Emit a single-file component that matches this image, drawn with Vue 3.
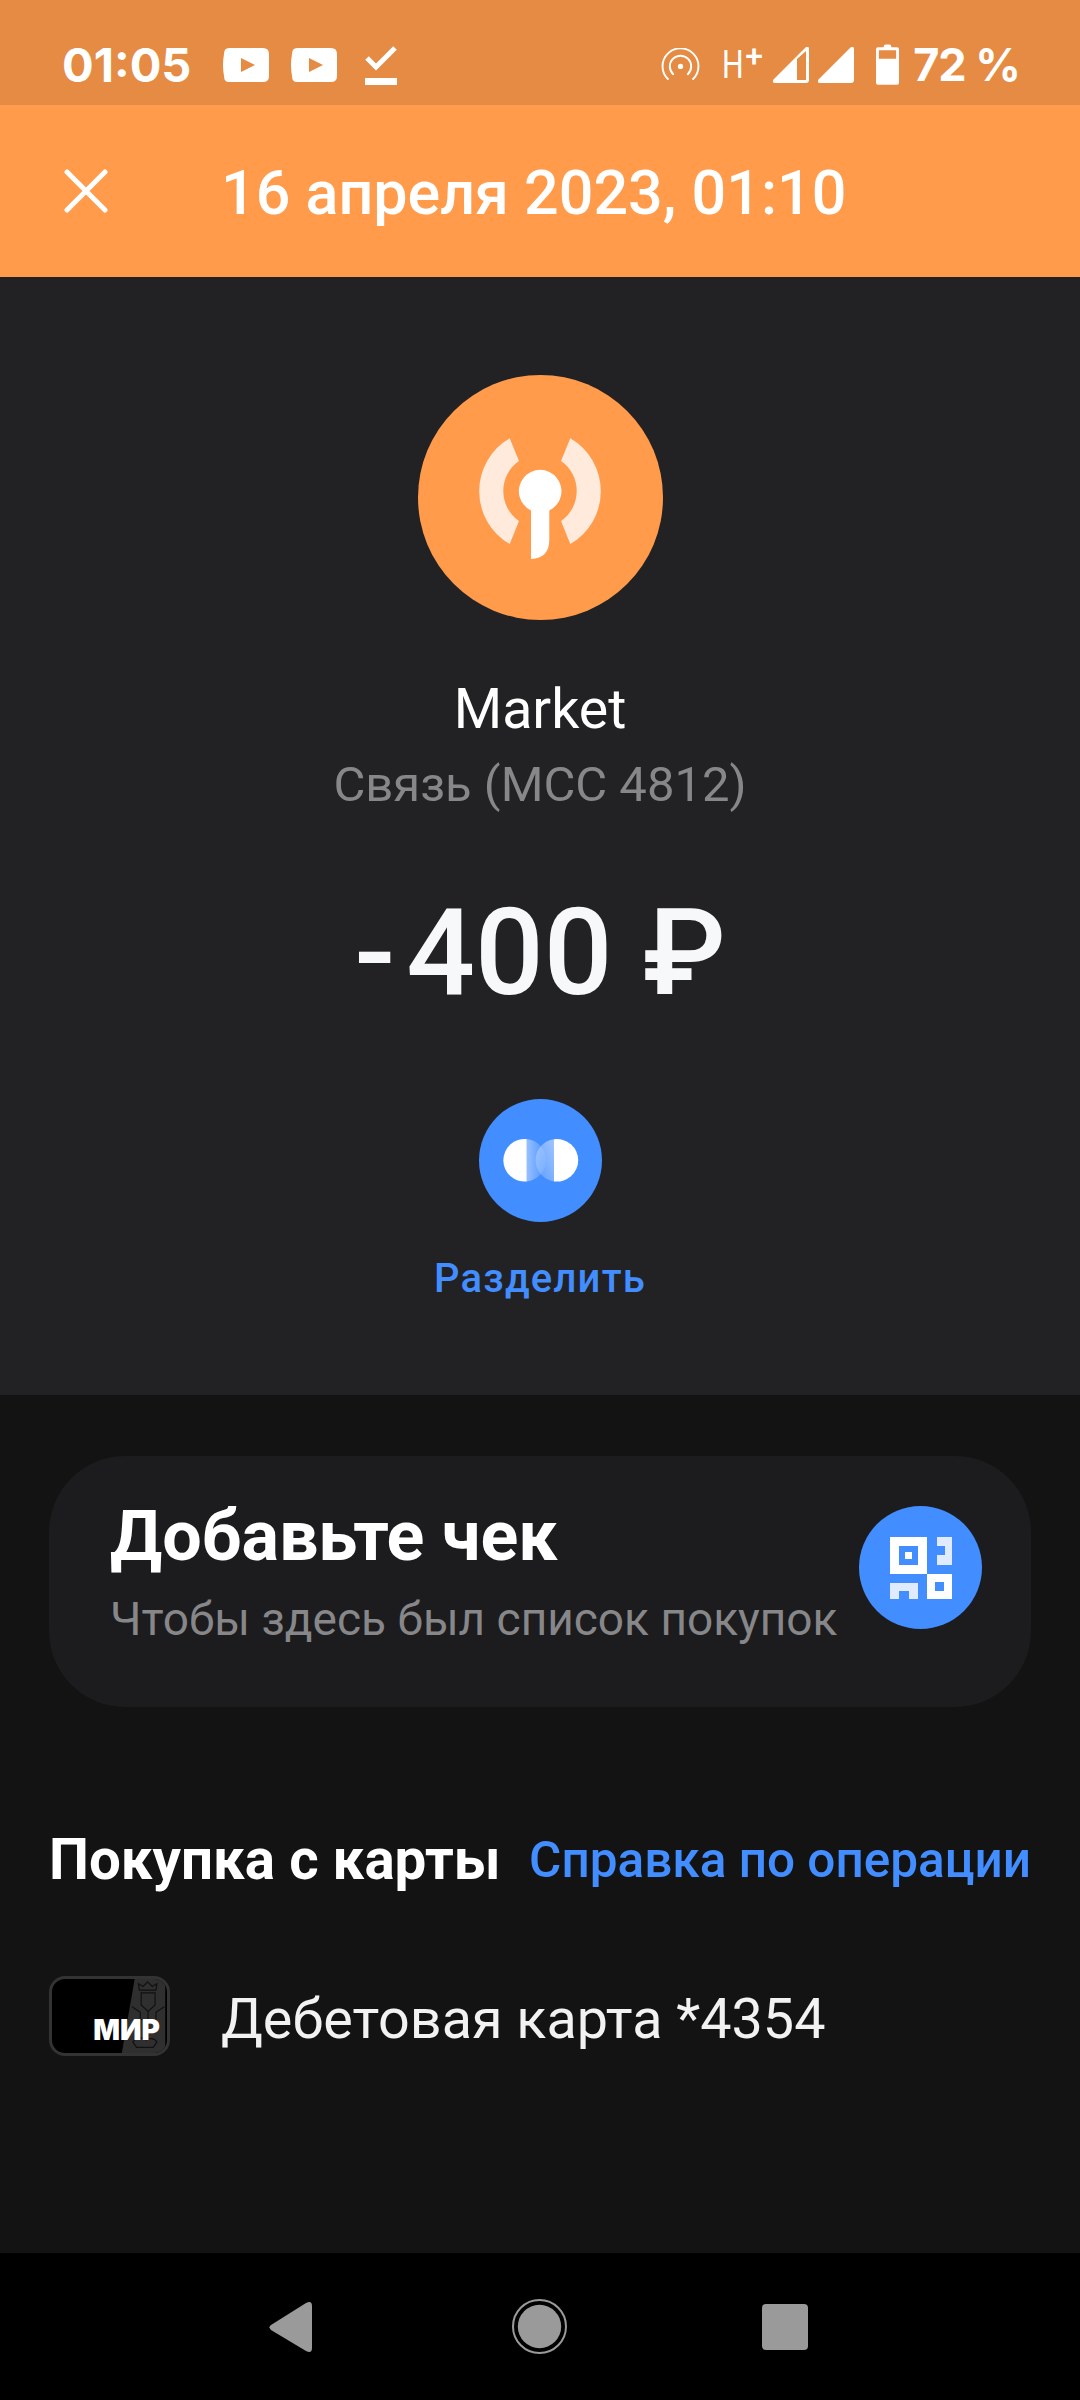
<script setup>
const title = '16 апреля 2023, 01:10'
</script>

<template>
  <div class="screen">
    <div class="status">
      <div class="status-left">
        <span class="time">01:05</span>
        <svg class="yt" viewBox="0 0 46 34"><path fill-rule="evenodd" fill="#fff" d="M6 0H40Q46 0 46 6Q47 17 46 28Q46 34 40 34H6Q1 34 1 28Q-1 17 1 6Q1 0 6 0ZM18 10V24L32 17Z"/></svg>
        <svg class="yt" viewBox="0 0 46 34"><path fill-rule="evenodd" fill="#fff" d="M6 0H40Q46 0 46 6Q47 17 46 28Q46 34 40 34H6Q1 34 1 28Q-1 17 1 6Q1 0 6 0ZM18 10V24L32 17Z"/></svg>
        <svg class="dl" viewBox="0 0 32 40"><path d="M2 13L11 22L30 3" fill="none" stroke="#fff" stroke-width="5"/><rect y="33" width="32" height="7" fill="#fff"/></svg>
      </div>
      <div class="status-right">
        <svg class="hot" viewBox="0 0 40 34" fill="none" stroke="#fff" stroke-width="2" stroke-linecap="round"><path d="M7 32A18.500 18.500 0 1 1 33 32"/><path d="M12.500 27A11 11 0 1 1 27.500 27"/><circle cx="20" cy="19" r="2.700" fill="#fff" stroke="none"/></svg>
        <span class="hplus"><span class="h">H</span><span class="plus">+</span></span>
        <svg class="sig" viewBox="0 0 36 36"><path fill="#fff" fill-rule="evenodd" d="M0 33L33 0Q36-1 36 2V33Q36 36 33 36H2Q-1 36 0 33ZM24 12V33H33V4Z"/></svg>
        <svg class="sig sig2" viewBox="0 0 36 36"><path fill="#fff" d="M0 33L33 0Q36-1 36 2V33Q36 36 33 36H2Q-1 36 0 33Z"/></svg>
        <svg class="bat" viewBox="0 0 24 42"><path fill="#fff" fill-rule="evenodd" d="M8 3Q8 0 10 0H14Q16 0 16 3H22Q24 3 24 5V40Q24 42 22 42H2Q0 42 0 40V5Q0 3 2 3ZM3 6V15H21V6Z"/></svg>
        <span class="pct">72 %</span>
      </div>
    </div>

    <header class="toolbar">
      <svg class="close" viewBox="0 0 44 44"><path d="M3 3L41 41M41 3L3 41" stroke="#fff" stroke-width="5" stroke-linecap="round"/></svg>
      <h1 class="title">{{ title }}</h1>
    </header>

    <section class="hero">
      <div class="avatar">
        <svg viewBox="0 0 245 245" width="245" height="245">
          <path fill="#ffeadc" d="M91.700 63.300L101 86A36.500 36.500 0 0 0 101 146L91.700 169A61 61 0 0 1 91.700 63.300Z" />
          <path fill="#ffeadc" d="M152.300 63.300L143 86A36.500 36.500 0 0 1 143 146L152.300 169A61 61 0 0 0 152.300 63.300Z" />
          <path fill="#fff" d="M113 135.400A21.300 21.300 0 1 1 131.300 135.400V165Q131.300 183 113 184Z"/>
        </svg>
      </div>
      <div class="merchant">Market</div>
      <div class="category">Связь (MCC 4812)</div>
      <div class="amount"><span class="minus">-</span>400 ₽</div>
      <div class="split-btn">
        <svg viewBox="0 0 123 123" width="123" height="123">
          <defs>
            <linearGradient id="splitL" x1="0" y1="0" x2="1" y2="0">
              <stop offset="0" stop-color="#fff" stop-opacity=".45"/>
              <stop offset="1" stop-color="#fff" stop-opacity=".05"/>
            </linearGradient>
            <linearGradient id="splitR" x1="1" y1="0" x2="0" y2="1">
              <stop offset="0" stop-color="#fff" stop-opacity=".5"/>
              <stop offset="1" stop-color="#fff" stop-opacity=".12"/>
            </linearGradient>
          </defs>
          <path fill="url(#splitL)" d="M47.700 40.100A21.300 21.300 0 0 1 47.700 82.500Z"/>
          <path fill="url(#splitR)" d="M75 40.200A21.300 21.300 0 0 0 75 82.400Z"/>
          <path fill="#fff" d="M47.700 40.100A21.300 21.300 0 1 0 47.700 82.500Z"/>
          <path fill="#fff" d="M75 40.200A21.300 21.300 0 1 1 75 82.400Z"/>
        </svg>
      </div>
      <div class="split-label">Разделить</div>
    </section>

    <main class="content">
      <div class="receipt">
        <div class="receipt-text">
          <div class="receipt-title">Добавьте чек</div>
          <div class="receipt-sub">Чтобы здесь был список покупок</div>
        </div>
        <div class="qr">
          <svg viewBox="0 0 62 62" width="62" height="62">
            <path fill="#fff" fill-rule="evenodd" d="M0 0H37V37H0ZM9 9V28H28V9ZM15 15H22V22H15ZM37 37H62V62H37ZM45 45V54H54V45Z"/>
            <path fill="#e1ebff" d="M47 0H62V28H47V18H55V9H47ZM0 46H28V62H19V54H9V62H0Z"/>
          </svg>
        </div>
      </div>

      <div class="op-row">
        <span class="op-title">Покупка с карты</span>
        <span class="op-link">Справка по операции</span>
      </div>

      <div class="card-row">
        <div class="card-icon">
          <svg class="arms" viewBox="0 0 47 80" width="47" height="74">
            <path fill="#2f2f2f" d="M14 0H47V80H0Z"/>
            <g fill="none" stroke="#111" stroke-width="1.300">
              <path d="M19 12L18 5L23 8L28 3L33 8L38 5L37 12Z"/>
              <path d="M21 15H36V28L28.500 35L21 28Z"/>
              <path d="M11 30L20 36V55M46 30L37 36V55"/>
              <path d="M20 44H37M28.500 35V44"/>
              <path d="M12 68Q18 60 26 66Q34 62 38 68L34 74H16Z"/>
            </g>
          </svg>
          <span class="mir">МИР</span>
        </div>
        <span class="card-name">Дебетовая карта *4354</span>
      </div>
    </main>

    <nav class="navbar">
      <svg class="nav-back" viewBox="0 0 43 50"><path fill="#9a9a9a" d="M2 28Q-1 25 2 23L37 1Q43-2 43 4V46Q43 52 37 49Z"/></svg>
      <svg class="nav-home" viewBox="0 0 55 55"><circle cx="27.500" cy="27.500" r="26.500" fill="none" stroke="#9a9a9a" stroke-width="2"/><circle cx="27.500" cy="27.500" r="21.700" fill="#9a9a9a"/></svg>
      <div class="nav-square"></div>
    </nav>
  </div>
</template>

<style>
html, body { margin: 0; background: #000; }
</style>

<style scoped>
.screen {
  width: 1080px;
  height: 2400px;
  display: flex;
  flex-direction: column;
  overflow: hidden;
  background: #131313;
  color: #fff;
  font-family: Roboto, "Noto Sans", sans-serif;
}
.status {
  height: 105px;
  flex: none;
  background: #e58b43;
  display: flex;
  align-items: center;
  justify-content: space-between;
  padding: 24px 60px 0 62px;
  box-sizing: border-box;
}
.status-left, .status-right { display: flex; align-items: center; }
.time { font: 700 47px/50px Inter, sans-serif; margin-right: 32px; }
.yt { width: 46px; height: 34px; margin-right: 22px; }
.dl { width: 32px; height: 40px; margin-left: 6px; }
.hot { width: 39px; height: 33px; margin-right: 22px; }
.hplus { display: flex; align-items: flex-start; width: 40px; height: 36px; margin-right: 1px; }
.h { font-size: 38px; line-height: 36px; font-weight: 400; display: block; width: 23px; transform: scaleX(.8); transform-origin: left; }
.plus { font-size: 32px; line-height: 24px; font-weight: 500; margin-top: -3px; }
.sig { width: 36px; height: 36px; margin-left: 10px; }
.sig2 { margin-left: 9px; }
.bat { width: 23px; height: 41px; margin-left: 22px; margin-right: 14px; }
.pct { font: 700 45px/50px Inter, sans-serif; letter-spacing: -1px; }
.toolbar {
  height: 172px;
  flex: none;
  background: #ff9b4b;
  display: flex;
  align-items: center;
  padding-left: 64px;
  box-sizing: border-box;
}
.close { width: 44px; height: 44px; margin-right: 113px; }
.title { margin: 0; padding-top: 4px; font-size: 61px; font-weight: 500; white-space: nowrap; }
.hero {
  height: 1118px;
  flex: none;
  background: #222224;
  display: flex;
  flex-direction: column;
  align-items: center;
  box-sizing: border-box;
  padding-top: 98px;
}
.avatar { width: 245px; height: 245px; border-radius: 50%; background: #ff9b4b; }
.merchant { margin-top: 57px; font-size: 55.500px; line-height: 66px; }
.category { margin-top: 12px; font-size: 49px; line-height: 60px; color: #87878a; }
.amount { margin-top: 68px; font-size: 121px; line-height: 140px; font-weight: 500; color: #f7f8fa; white-space: nowrap; }
.minus { margin-right: 11px; }
.split-btn { margin-top: 76px; width: 123px; height: 123px; border-radius: 50%; background: #428dff; }
.split-label { margin-top: 32px; font-size: 40px; line-height: 50px; color: #428dff; font-weight: 500; letter-spacing: 1.200px; }
.content { flex: 1; padding: 61px 49px 0; box-sizing: border-box; }
.receipt {
  height: 251px;
  border-radius: 76px;
  background: #1c1c1e;
  display: flex;
  align-items: center;
  justify-content: space-between;
  padding: 0 49px 0 61px;
}
.receipt-text { padding-bottom: 21px; }
.receipt-title { font-size: 70px; line-height: 80px; font-weight: 700; }
.receipt-sub { margin-top: 15px; font-size: 46px; line-height: 56px; color: #87878a; white-space: nowrap; }
.qr {
  width: 123px; height: 123px; border-radius: 50%; background: #428dff;
  display: flex; align-items: center; justify-content: center;
  margin-bottom: 28px;
}
.op-row {
  margin-top: 119px;
  display: flex;
  justify-content: space-between;
  align-items: center;
  white-space: nowrap;
}
.op-title { font-size: 56.500px; line-height: 68px; font-weight: 700; }
.op-link { font-size: 49.500px; line-height: 68px; font-weight: 500; color: #428dff; }
.card-row { margin-top: 82px; display: flex; align-items: center; }
.card-icon {
  position: relative;
  width: 121px; height: 80px;
  box-sizing: border-box;
  border: 3px solid #333;
  border-radius: 16px;
  background: #000;
  overflow: hidden;
  margin-right: 51px;
}
.arms { position: absolute; right: 0; top: 0; }
.mir {
  position: absolute; right: 7px; bottom: 13px;
  font: 900 28px/20px Inter, sans-serif; color: #fff;
}
.card-name { padding-top: 6px; font-size: 55.700px; line-height: 68px; color: #f2f2f2; }
.navbar {
  height: 147px;
  flex: none;
  background: #000;
  display: flex;
  align-items: center;
  padding-left: 269px;
}
.nav-back { width: 43px; height: 50px; margin-right: 200px; }
.nav-home { width: 55px; height: 55px; margin-right: 195px; }
.nav-square { width: 46px; height: 46px; border-radius: 4px; background: #9a9a9a; }
</style>
